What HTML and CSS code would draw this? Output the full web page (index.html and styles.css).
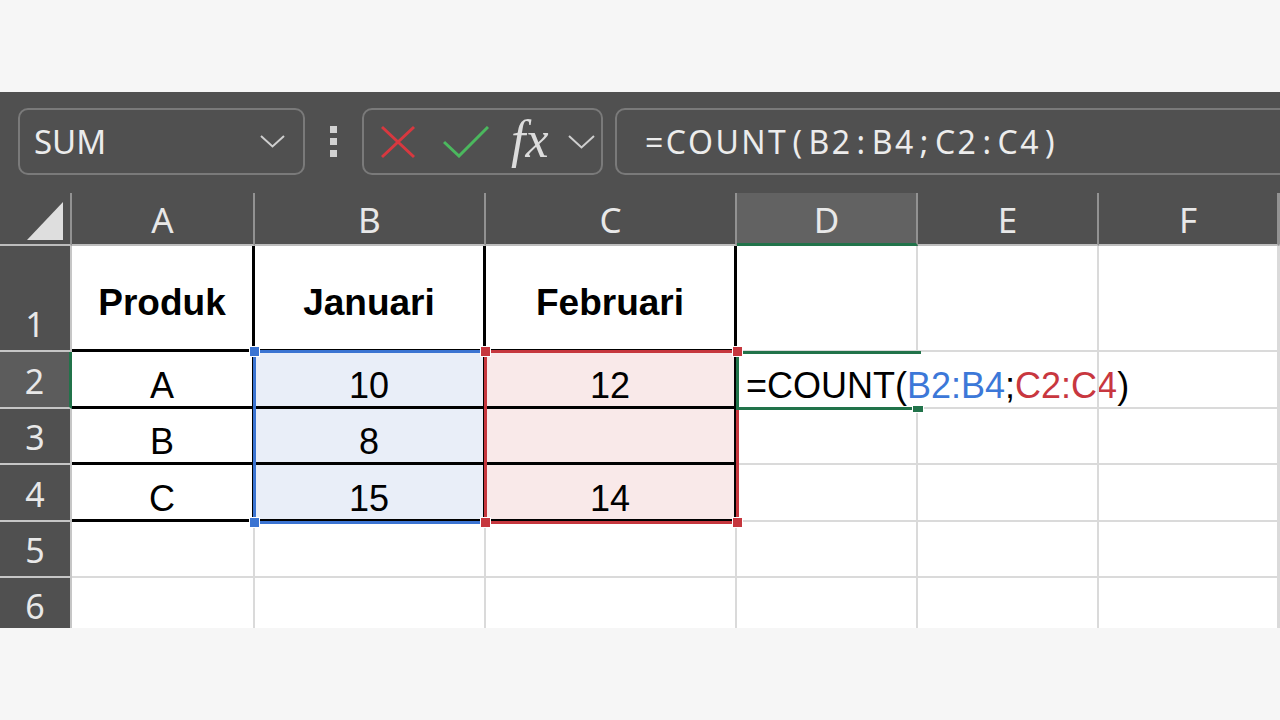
FILE: index.html
```html
<!DOCTYPE html>
<html lang="id">
<head>
    <meta charset="UTF-8">
    <title>COUNT</title>
    <link rel="stylesheet" href="styles.css">
</head>
<body>
<div class="band"></div>
<div class="excel">
    <div class="formula-bar">
        <div class="name-box">
            <span>SUM</span>
            <svg class="chev" width="25" height="13" viewBox="0 0 25 13"><polyline points="1,1 12.5,11.5 24,1"/></svg>
        </div>
        <div class="grip"><i></i><i></i><i></i></div>
        <div class="fx-box">
            <svg class="ico-x" width="36" height="34" viewBox="0 0 36 34"><line x1="2" y1="2" x2="34" y2="32"/><line x1="34" y1="2" x2="2" y2="32"/></svg>
            <svg class="ico-ok" width="46" height="32" viewBox="0 0 46 32"><polyline points="1,16 16,30 45,1"/></svg>
            <span class="fx">fx</span>
            <svg class="chev" width="27" height="14" viewBox="0 0 27 14"><polyline points="1,1 13.5,12.5 26,1"/></svg>
        </div>
        <div class="formula-input">=COUNT<span class="p">(</span>B2<span class="p">:</span>B4<span class="p">;</span>C2<span class="p">:</span>C4<span class="p">)</span></div>
    </div>

    <div class="sheet">
        <!-- kepala kolom -->
        <div class="corner"><svg width="36" height="38" viewBox="0 0 36 38"><polygon points="36,0 36,38 0,38"/></svg></div>
        <div class="ch">A</div>
        <div class="ch">B</div>
        <div class="ch">C</div>
        <div class="ch active-col">D</div>
        <div class="ch">E</div>
        <div class="ch">F</div>
        <div class="ch"></div>

        <!-- baris 1 -->
        <div class="rh">1</div>
        <div class="c tb r1">Produk</div>
        <div class="c tb r1">Januari</div>
        <div class="c tb r1">Februari</div>
        <div class="c"></div>
        <div class="c"></div>
        <div class="c"></div>
        <div class="c"></div>

        <!-- baris 2 -->
        <div class="rh active-row">2</div>
        <div class="c tb">A</div>
        <div class="c tb fill-b">10</div>
        <div class="c tb fill-r">12</div>
        <div class="c edit">=COUNT(<span class="ref-b">B2:B4</span>;<span class="ref-r">C2:C4</span>)</div>
        <div class="c"></div>
        <div class="c"></div>
        <div class="c"></div>

        <!-- baris 3 -->
        <div class="rh">3</div>
        <div class="c tb">B</div>
        <div class="c tb fill-b">8</div>
        <div class="c tb fill-r"></div>
        <div class="c"></div>
        <div class="c"></div>
        <div class="c"></div>
        <div class="c"></div>

        <!-- baris 4 -->
        <div class="rh">4</div>
        <div class="c tb">C</div>
        <div class="c tb fill-b">15</div>
        <div class="c tb fill-r">14</div>
        <div class="c"></div>
        <div class="c"></div>
        <div class="c"></div>
        <div class="c"></div>

        <!-- baris 5 -->
        <div class="rh">5</div>
        <div class="c"></div>
        <div class="c"></div>
        <div class="c"></div>
        <div class="c"></div>
        <div class="c"></div>
        <div class="c"></div>
        <div class="c"></div>

        <!-- baris 6 -->
        <div class="rh">6</div>
        <div class="c"></div>
        <div class="c"></div>
        <div class="c"></div>
        <div class="c"></div>
        <div class="c"></div>
        <div class="c"></div>
        <div class="c"></div>

        <!-- range referensi + sel aktif -->
        <div class="range range-b"><i class="h tl"></i><i class="h tr"></i><i class="h bl"></i><i class="h br"></i></div>
        <div class="range range-r"><i class="h tl"></i><i class="h tr"></i><i class="h bl"></i><i class="h br"></i></div>
        <div class="selection"><i class="fill-handle"></i></div>
    </div>
</div>
<div class="band"></div>
</body>
</html>
```

FILE: styles.css
```css
body {
    margin: 0;
    background-color: #f6f6f6;
    font-family: "Liberation Sans", Arial, sans-serif;
}

.band {
    height: 92px;
}

.excel {
    height: 536px;
    background-color: #505050;
    overflow: hidden;
}

/* baris rumus */
.formula-bar {
    display: flex;
    align-items: center;
    height: 101px;
    padding: 16px 0 18px 18px;
    box-sizing: border-box;
}

.name-box {
    width: 287px;
    height: 67px;
    box-sizing: border-box;
    border: 2px solid #7a7a7a;
    border-radius: 10px;
    display: flex;
    align-items: center;
    justify-content: space-between;
    padding: 0 18px 0 14px;
    color: #ececec;
    font-family: "Noto Sans", sans-serif;
    font-size: 33px;
}

.chev polyline {
    fill: none;
    stroke: #cfcfcf;
    stroke-width: 2;
}

.grip {
    width: 57px;
    display: flex;
    flex-direction: column;
    align-items: center;
    gap: 5px;
}

.grip i {
    display: block;
    width: 7px;
    height: 7px;
    background-color: #d2d2d2;
}

.fx-box {
    width: 241px;
    height: 67px;
    box-sizing: border-box;
    border: 2px solid #7a7a7a;
    border-radius: 10px;
    display: flex;
    align-items: center;
    padding-left: 16px;
}

.ico-x line {
    stroke: #d8383f;
    stroke-width: 3;
}

.ico-ok {
    margin-left: 27px;
}

.ico-ok polyline {
    fill: none;
    stroke: #4bb85e;
    stroke-width: 3;
}

.fx {
    width: 40px;
    margin-left: 22px;
    color: #dcdcdc;
    font-family: "Liberation Serif", serif;
    font-style: italic;
    font-size: 52px;
    line-height: 1;
    margin-top: -4px;
}

.fx-box .chev {
    margin-left: 17px;
}

.formula-input {
    flex: 1;
    height: 67px;
    box-sizing: border-box;
    margin-left: 12px;
    margin-right: -20px;
    border: 2px solid #7a7a7a;
    border-radius: 10px;
    display: flex;
    align-items: center;
    padding-left: 28px;
    color: #ececec;
    font-family: "Noto Sans", sans-serif;
    font-size: 32px;
    letter-spacing: 2.5px;
    white-space: nowrap;
}

.formula-input .p {
    margin: 0 4px;
}

/* lembar kerja */
.sheet {
    position: relative;
    display: grid;
    grid-template-columns: 72px 183px 231px 251px 181px 181px 180px 1fr;
    grid-template-rows: 53px 106px 57px 56px 57px 56px 56px;
    background-color: #fff;
}

.corner,
.ch {
    background-color: #505050;
    border-right: 2px solid #929292;
    border-bottom: 2px solid #bdbdbd;
    box-sizing: border-box;
}

.corner {
    display: flex;
    justify-content: flex-end;
    align-items: flex-end;
    padding: 0 7px 4px 0;
}

.corner polygon {
    fill: #dedede;
}

.ch {
    display: flex;
    justify-content: center;
    align-items: center;
    color: #e8e8e8;
    font-family: "Noto Sans", sans-serif;
    font-size: 35px;
    padding-top: 2px;
}

.active-col {
    background-color: #626262;
    border-bottom: 3px solid #21734a;
}

.rh {
    background-color: #505050;
    border-right: 2px solid #c6c6c6;
    border-bottom: 2px solid #c6c6c6;
    box-sizing: border-box;
    display: flex;
    justify-content: center;
    align-items: flex-end;
    padding-bottom: 9px;
    color: #e8e8e8;
    font-family: "Noto Sans", sans-serif;
    font-size: 34px;
    line-height: 34px;
}

.active-row {
    background-color: #5c5c5c;
    border-right: 3px solid #21734a;
}

.c {
    border-right: 2px solid #dadada;
    border-bottom: 2px solid #dadada;
    box-sizing: border-box;
    display: flex;
    justify-content: center;
    align-items: flex-end;
    padding-bottom: 3px;
    color: #000;
    font-size: 36px;
    line-height: 36px;
    white-space: nowrap;
}

/* garis tabel hitam */
.tb {
    border-right: 3px solid #000;
    border-bottom: 3px solid #000;
    padding-bottom: 2px;
}

.c.r1 {
    font-weight: bold;
    font-size: 37px;
    padding-bottom: 28px;
}

.fill-b {
    background-color: #e9eef8;
}

.fill-r {
    background-color: #f9e9e9;
}

.edit {
    justify-content: flex-start;
    padding-left: 9px;
    border-right: none;
}

.ref-b {
    color: #3c78d8;
}

.ref-r {
    color: #c8373f;
}

/* bingkai referensi rumus */
.range {
    position: absolute;
    inset: -2px -2px -2px -2px;
    border: 3px solid;
}

.range-b {
    grid-column: 3 / 4;
    grid-row: 3 / 6;
    right: -1px;
    border-color: #3b74d2;
}

.range-r {
    grid-column: 4 / 5;
    grid-row: 3 / 6;
    border-color: #c6373e;
}

.h {
    position: absolute;
    z-index: 5;
    width: 9px;
    height: 9px;
    box-shadow: 0 0 0 1px #fff;
}

.range-b .h {
    background-color: #3b74d2;
}

.range-r .h {
    background-color: #c6373e;
}

.tl { left: -6px; top: -6px; }
.tr { right: -6px; top: -6px; }
.bl { left: -6px; bottom: -6px; }
.br { right: -6px; bottom: -6px; }

.selection {
    position: absolute;
    grid-column: 5 / 6;
    grid-row: 3 / 4;
    inset: -1px -3px -1px -1px;
    border: 3px solid #21734a;
    border-right: none;
}

.fill-handle {
    position: absolute;
    right: -2px;
    bottom: -5px;
    width: 10px;
    height: 6px;
    background-color: #21734a;
    box-shadow: 0 0 0 1px #fff;
}
```
